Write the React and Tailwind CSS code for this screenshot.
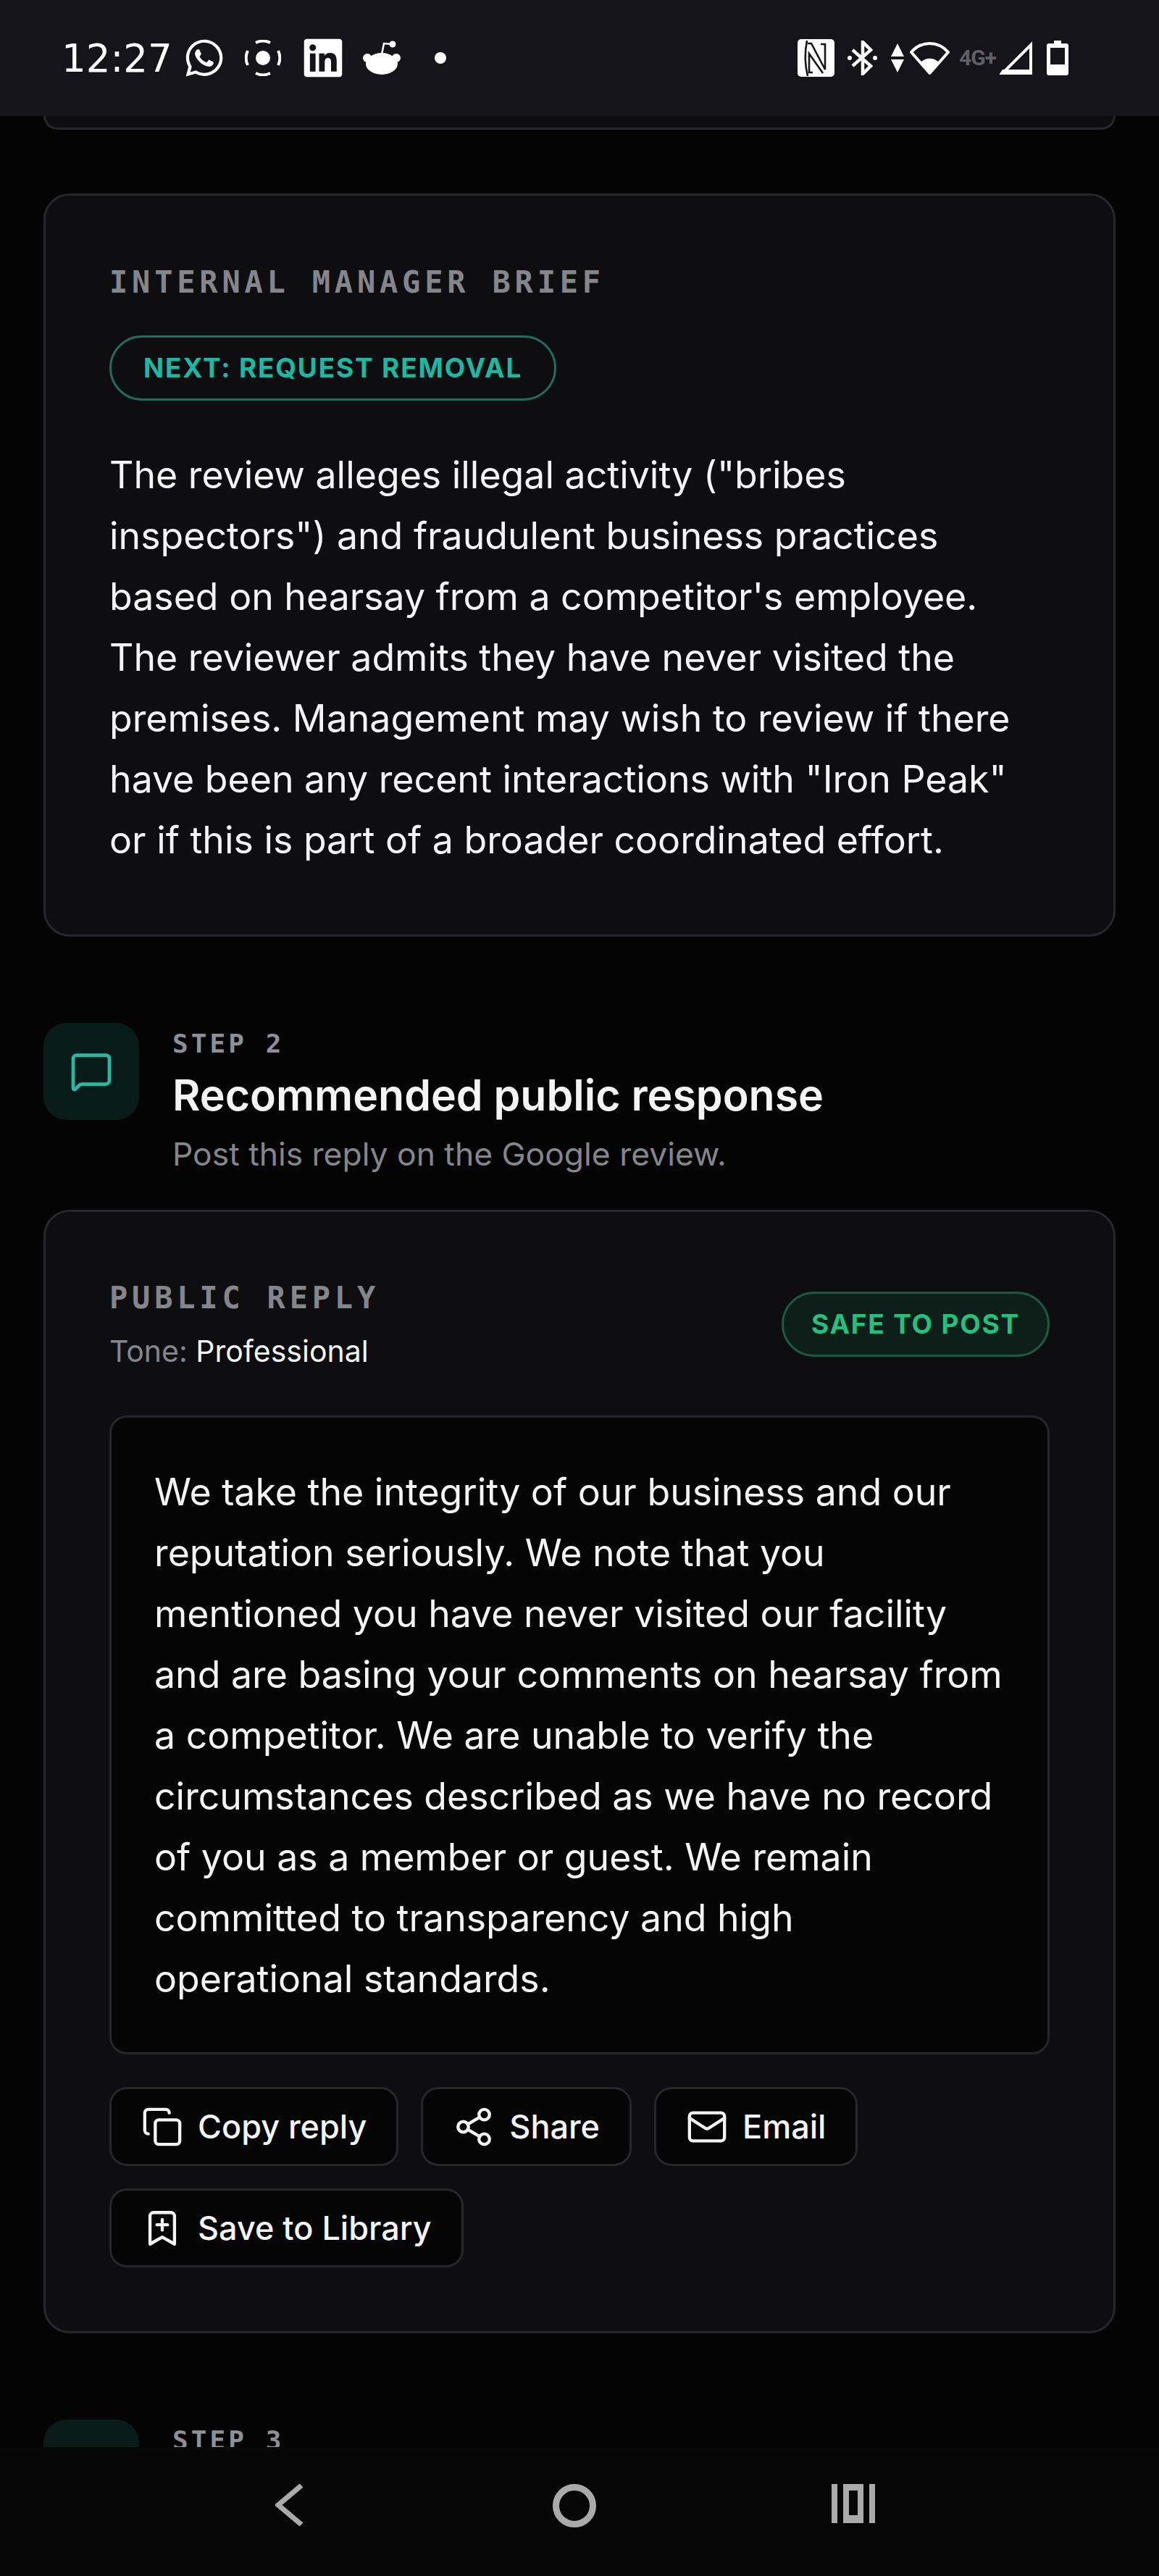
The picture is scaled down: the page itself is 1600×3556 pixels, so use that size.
import React from 'react';
import { BookmarkPlus, Copy, Mail, MessageSquare, Share2 } from 'lucide-react';
import { FaLinkedin, FaWhatsapp } from 'react-icons/fa';

const BRIEF =
    'The review alleges illegal activity ("bribes inspectors") and fraudulent business practices based on hearsay from a competitor\'s employee. The reviewer admits they have never visited the premises. Management may wish to review if there have been any recent interactions with "Iron Peak" or if this is part of a broader coordinated effort.';

const REPLY =
    'We take the integrity of our business and our reputation seriously. We note that you mentioned you have never visited our facility and are basing your comments on hearsay from a competitor. We are unable to verify the circumstances described as we have no record of you as a member or guest. We remain committed to transparency and high';

const MONO = "font-['DejaVu_Sans_Mono',monospace]";

function StatusBar() {
    return (
        <header className="flex h-[160px] shrink-0 items-center bg-[#14141a] pl-[85px] pr-[125px] text-white">
            <span className="w-[155px] font-['DejaVu_Sans',sans-serif] text-[53px] leading-none">12:27</span>
            <FaWhatsapp className="ml-[13px] h-[58px] w-[58px]" />
            <svg className="ml-[27px] h-[50px] w-[50px]" viewBox="0 0 50 50" fill="none" stroke="currentColor">
                <circle cx="25" cy="25" r="10" fill="currentColor" stroke="none" />
                <path strokeWidth="4" d="M15 4a23 23 0 0 1 20 0M46 15a23 23 0 0 1 0 20M35 46a23 23 0 0 1-20 0M4 35a23 23 0 0 1 0-20" />
            </svg>
            <FaLinkedin className="ml-[28px] h-[60px] w-[60px]" />
            <svg className="ml-[24px] h-[50px] w-[54px]" viewBox="0 0 54 50" fill="currentColor">
                <circle cx="7" cy="25" r="6" />
                <circle cx="47" cy="25" r="6" />
                <ellipse cx="27" cy="33" rx="22" ry="15" />
                <circle cx="42" cy="6" r="4.5" />
                <path d="M27 20L30 5l12 1" fill="none" stroke="currentColor" strokeWidth="2.5" />
            </svg>
            <span className="ml-[46px] h-[16px] w-[16px] rounded-full bg-white" />

            <div className="ml-auto flex items-center">
                <svg className="h-[52px] w-[51px]" viewBox="0 0 51 52" fill="none">
                    <rect width="51" height="52" rx="5" fill="#ffffff" />
                    <path stroke="#14141a" strokeWidth="2.6" d="M13 2c-3 15-3 33 1 49M14 6h5l19 36V7h-6M21 46h-5V20l19 27" />
                </svg>
                <svg className="ml-[18px] h-[48px] w-[41px]" viewBox="0 0 41 48" fill="none" stroke="currentColor" strokeWidth="4.5">
                    <path d="M7 13l25 22-11 11V2l11 11L7 35" />
                    <circle cx="3" cy="24" r="3" fill="currentColor" stroke="none" />
                    <circle cx="38" cy="24" r="3" fill="currentColor" stroke="none" />
                </svg>
                <svg className="ml-[19px] h-[40px] w-[18px]" viewBox="0 0 18 40" fill="currentColor">
                    <path d="M9 0l9 18H0zM0 22h18l-9 18z" />
                </svg>
                <svg className="ml-[7px] h-[47px] w-[57px]" viewBox="0 0 57 47" fill="none" stroke="currentColor">
                    <path strokeWidth="4" strokeLinejoin="round" d="M3 15C17 -1 40 -1 54 15L28.5 44z" />
                    <path fill="currentColor" stroke="none" d="M16 29c7-7 18-7 25 0L28.5 46z" />
                </svg>
                <span className="ml-[12px] w-[52px] font-['Roboto',sans-serif] text-[30px] font-bold leading-none tracking-[-1px] text-[#5f5f64]">4G+</span>
                <svg className="ml-[3px] h-[46px] w-[46px]" viewBox="0 0 46 46" fill="none" stroke="currentColor">
                    <path strokeWidth="4" d="M44 5v39H5z" />
                    <path fill="currentColor" stroke="none" d="M5 39h39v6H1z" />
                </svg>
                <svg className="ml-[20px] h-[48px] w-[30px]" viewBox="0 0 30 48" fill="currentColor">
                    <path fillRule="evenodd" d="M10 0h10v4h7a3 3 0 0 1 3 3v38a3 3 0 0 1-3 3H3a3 3 0 0 1-3-3V7a3 3 0 0 1 3-3h7zM5 10v23h20V10z" />
                </svg>
            </div>
        </header>
    );
}

function Card({ className = '', children }) {
    return (
        <section className={`rounded-[36px] border-[3px] border-[#26272b] bg-[#0e0e11] px-[88px] ${className}`}>
            {children}
        </section>
    );
}

function CardLabel({ children }) {
    return (
        <h3 className={`${MONO} text-[42px] font-bold leading-[52px] tracking-[5.8px] text-[#85868c]`}>{children}</h3>
    );
}

function StepHeading({ step, title, subtitle }) {
    return (
        <div className="flex gap-[46px]">
            <div className="flex h-[134px] w-[132px] shrink-0 items-center justify-center rounded-[32px] bg-[#0a1c1a] text-[#2bb8a3]">
                {title && <MessageSquare size={60} strokeWidth={1.9} />}
            </div>
            <div className="pt-[7px]">
                <p className={`${MONO} text-[36px] font-bold leading-[44px] tracking-[4.1px] text-[#8f9095]`}>{step}</p>
                {title && <h2 className="mt-[14px] text-[59px] font-semibold leading-[70px] text-[#f4f4f5]">{title}</h2>}
                {subtitle && <p className="mt-[17px] text-[44.4px] leading-[58px] text-[#85868c]">{subtitle}</p>}
            </div>
        </div>
    );
}

function ActionButton({ icon: Icon, children }) {
    return (
        <button className="flex h-[109px] items-center gap-[20px] rounded-[24px] border-[3px] border-[#26272b] bg-[#050506] px-[41px] text-[45px] font-medium text-[#f4f4f5]">
            <Icon size={58} strokeWidth={1.8} />
            {children}
        </button>
    );
}

export default function App() {
    return (
        <div className="flex h-[3556px] w-[1600px] flex-col overflow-hidden bg-[#040405] font-['Inter',sans-serif]">
            <StatusBar />

            <main className="min-h-0 flex-1 overflow-hidden px-[60px]">
                {/* bottom edge of the card scrolled under the status bar */}
                <div className="h-[19px] rounded-b-[36px] border-x-[3px] border-b-[3px] border-[#26272b] bg-[#0e0e11]" />

                <Card className="mt-[88px] h-[1026px] pt-[94px]">
                    <CardLabel>INTERNAL MANAGER BRIEF</CardLabel>
                    <span className="mt-[47px] inline-flex h-[90px] items-center rounded-full border-[3px] border-[#226b5e] px-[44px] text-[37px] font-bold tracking-[1.8px] text-[#1db8a2]">
                        NEXT: REQUEST REMOVAL
                    </span>
                    <p className="mt-[60px] text-[51.8px] leading-[84px] text-[#f4f4f5]">{BRIEF}</p>
                </Card>

                <div className="mt-[119px]">
                    <StepHeading
                        step="STEP 2"
                        title="Recommended public response"
                        subtitle="Post this reply on the Google review."
                    />
                </div>

                <Card className="mt-[48px] h-[1551px] pt-[93px]">
                    <div className="flex items-start justify-between">
                        <div>
                            <CardLabel>PUBLIC REPLY</CardLabel>
                            <p className="mt-[22px] text-[41px] leading-[50px] text-[#85868c]">
                                Tone: <span className="text-[#f4f4f5]">Professional</span>
                            </p>
                        </div>
                        <span className="mt-[17px] inline-flex h-[90px] items-center rounded-full border-[3px] border-[#1c5a3f] bg-[#0d1f18] px-[38px] text-[37px] font-bold tracking-[1.8px] text-[#24c07f]">
                            SAFE TO POST
                        </span>
                    </div>

                    <div className="mt-[64px] rounded-[24px] border-[3px] border-[#26272b] bg-[#050506] pb-[60px] pl-[59px] pr-[53px] pt-[60px]">
                        <p className="text-[51.8px] leading-[84px] text-[#f4f4f5]">
                            {REPLY}
                            <br />
                            operational standards.
                        </p>
                    </div>

                    <div className="mt-[45px] flex flex-wrap gap-x-[31px] gap-y-[31px]">
                        <ActionButton icon={Copy}>Copy reply</ActionButton>
                        <ActionButton icon={Share2}>Share</ActionButton>
                        <ActionButton icon={Mail}>Email</ActionButton>
                        <ActionButton icon={BookmarkPlus}>Save to Library</ActionButton>
                    </div>
                </Card>

                <div className="mt-[119px]">
                    <StepHeading step="STEP 3" />
                </div>
            </main>

            <nav className="flex h-[178px] shrink-0 items-start bg-[#070708] pl-[380px] pt-[51px] text-[#aaaaaa]">
                <svg className="h-[58px] w-[38px]" viewBox="0 0 38 58" fill="none" stroke="currentColor" strokeWidth="7">
                    <path d="M36 2L4 29l32 27" />
                </svg>
                <svg className="ml-[345px] h-[60px] w-[60px]" viewBox="0 0 60 60" fill="none" stroke="currentColor" strokeWidth="9">
                    <circle cx="30" cy="30" r="25.5" />
                </svg>
                <svg className="ml-[325px] h-[54px] w-[60px]" viewBox="0 0 60 54" fill="currentColor">
                    <path fillRule="evenodd" d="M0 0h8v54H0zM52 0h8v54h-8zM16 0h28v54H16zM24 9v34h12V9z" />
                </svg>
            </nav>
        </div>
    );
}
